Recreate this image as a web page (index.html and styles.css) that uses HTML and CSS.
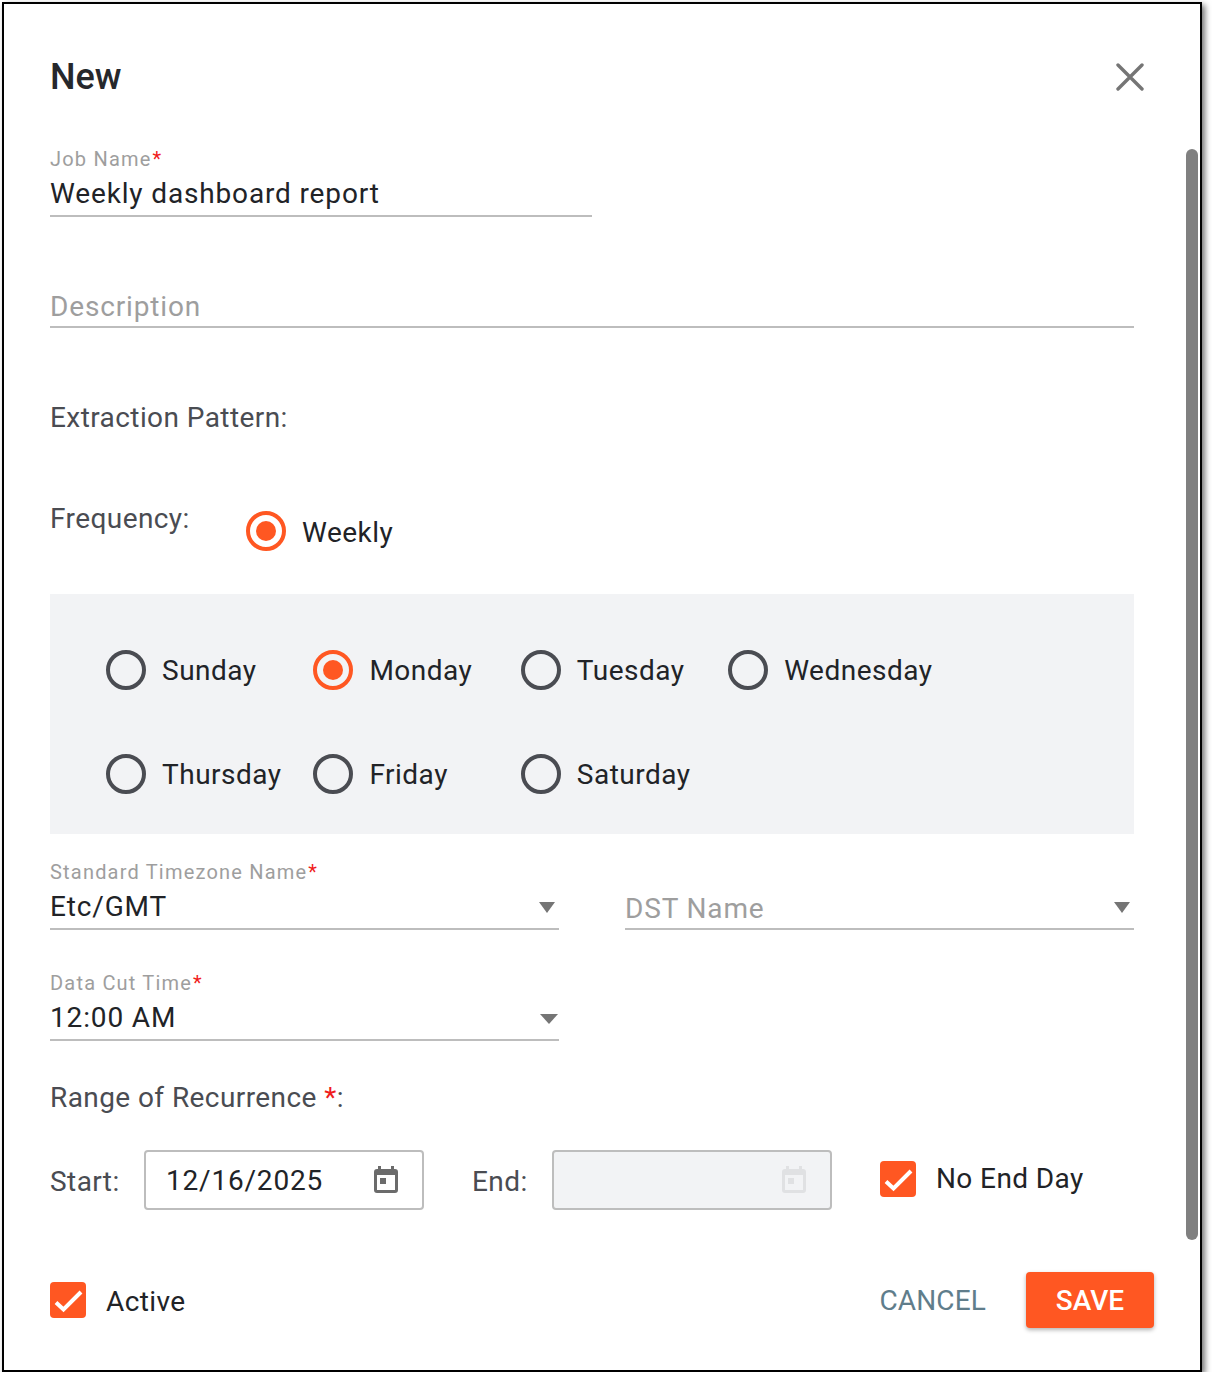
FILE: index.html
```html
<!DOCTYPE html>
<html lang="en">
<head>
<meta charset="utf-8">
<title>New</title>
<link rel="stylesheet" href="styles.css">
</head>
<body>
<div class="dialog">
  <div class="scrollbar"></div>
  <header class="head">
    <h1 class="title">New</h1>
    <svg class="close" viewBox="0 0 28 28" width="28" height="28"><path d="M2 2 26 26M26 2 2 26"/></svg>
  </header>

  <div class="field job">
    <div class="label">Job Name<span class="req">*</span></div>
    <div class="value">Weekly dashboard report</div>
  </div>

  <div class="field desc">
    <div class="value placeholder">Description</div>
  </div>

  <div class="section extraction">Extraction Pattern:</div>

  <div class="freq">
    <div class="section freq-label">Frequency:</div>
    <div class="opt"><span class="radio on"></span><span class="opt-text">Weekly</span></div>
  </div>

  <div class="days">
    <div class="opt"><span class="radio"></span><span class="opt-text">Sunday</span></div>
    <div class="opt"><span class="radio on"></span><span class="opt-text">Monday</span></div>
    <div class="opt"><span class="radio"></span><span class="opt-text">Tuesday</span></div>
    <div class="opt"><span class="radio"></span><span class="opt-text">Wednesday</span></div>
    <div class="opt"><span class="radio"></span><span class="opt-text">Thursday</span></div>
    <div class="opt"><span class="radio"></span><span class="opt-text">Friday</span></div>
    <div class="opt"><span class="radio"></span><span class="opt-text">Saturday</span></div>
  </div>

  <div class="select-row tz">
    <div class="field half">
      <div class="label">Standard Timezone Name<span class="req">*</span></div>
      <div class="value">Etc/GMT<span class="arrow"></span></div>
    </div>
    <div class="field half">
      <div class="value placeholder dst">DST Name<span class="arrow"></span></div>
    </div>
  </div>

  <div class="select-row cut">
    <div class="field half">
      <div class="label">Data Cut Time<span class="req">*</span></div>
      <div class="value">12:00 AM<span class="arrow wide"></span></div>
    </div>
  </div>

  <div class="section range">Range of Recurrence <span class="req">*</span>:</div>

  <div class="dates">
    <span class="date-label start">Start:</span>
    <div class="date-box">
      <span class="date-text">12/16/2025</span>
      <svg class="cal" viewBox="0 0 24 27" width="24" height="27"><path fill-rule="evenodd" d="M4 0h3v3h10V0h3v3h1a3 3 0 0 1 3 3v18a3 3 0 0 1-3 3H3a3 3 0 0 1-3-3V6a3 3 0 0 1 3-3h1zM3 9v15h18V9zM6 12h6v6H6z"/></svg>
    </div>
    <span class="date-label end">End:</span>
    <div class="date-box disabled">
      <svg class="cal" viewBox="0 0 24 27" width="24" height="27"><path fill-rule="evenodd" d="M4 0h3v3h10V0h3v3h1a3 3 0 0 1 3 3v18a3 3 0 0 1-3 3H3a3 3 0 0 1-3-3V6a3 3 0 0 1 3-3h1zM3 9v15h18V9zM6 12h6v6H6z"/></svg>
    </div>
    <div class="check-wrap noend">
      <svg class="check" viewBox="0 0 36 36" width="36" height="36"><rect width="36" height="36" rx="4"/><path d="M6 20.5 13.5 27.5 31 10"/></svg>
      <span class="check-text">No End Day</span>
    </div>
  </div>

  <footer class="foot">
    <div class="check-wrap">
      <svg class="check" viewBox="0 0 36 36" width="36" height="36"><rect width="36" height="36" rx="4"/><path d="M6 20.5 13.5 27.5 31 10"/></svg>
      <span class="check-text active">Active</span>
    </div>
    <div class="actions">
      <span class="cancel">CANCEL</span>
      <span class="save">SAVE</span>
    </div>
  </footer>
</div>
</body>
</html>
```
FILE: styles.css
```css
* { box-sizing: border-box; }
html, body { margin: 0; padding: 0; background: #fff; }
body { font-family: Roboto, "Liberation Sans", sans-serif; color: #212327; }

.dialog {
  position: relative;
  width: 1200px;
  height: 1370px;
  margin: 2px 0 0 2px;
  padding: 0 66px 0 46px;
  border: 2px solid #000;
  background: #fff;
  box-shadow: 3px 3px 6px rgba(0, 0, 0, .55);
  overflow: hidden;
}
.scrollbar {
  position: absolute;
  left: 1182px;
  top: 145px;
  width: 12px;
  height: 1091px;
  border-radius: 6px;
  background: #808080;
}

.head { display: flex; justify-content: space-between; align-items: center; height: 144px; }
.title { margin: 2px 0 0; font-size: 36px; line-height: 42px; font-weight: 500; color: #26282c; }
.close { margin: 2px -10px 0 0; }
.close path { fill: none; stroke: #757575; stroke-width: 3.4; stroke-linecap: round; }

.field { border-bottom: 2px solid #bdbdbd; }
.label { font-size: 20px; line-height: 22px; letter-spacing: 1.2px; color: #9e9e9e; }
.req { color: #f01c1c; }
.label .req { margin-left: 1px; }
.value { position: relative; font-size: 28px; line-height: 34px; letter-spacing: .85px; }
.placeholder { color: #9e9e9e; }

.job { width: 542px; height: 69px; }
.job .value { padding-top: 7px; }
.desc { margin-top: 67px; height: 44px; }
.desc .value { padding-top: 6px; }

.section { font-size: 28px; line-height: 34px; color: #4a4c52; letter-spacing: .42px; }
.extraction { margin-top: 73px; }

.freq { display: flex; margin-top: 67px; height: 92px; }
.freq-label { width: 196px; height: 34px; }
.freq .opt { margin-top: 2px; height: 54px; }
.freq .opt-text { margin-top: 4px; }

.opt { display: flex; align-items: center; }
.radio {
  flex: none;
  width: 40px;
  height: 40px;
  border: 4px solid #4a4c52;
  border-radius: 50%;
  margin-right: 16px;
  position: relative;
}
.radio.on { border-color: #ff5722; }
.radio.on::after {
  content: "";
  position: absolute;
  left: 6px;
  top: 6px;
  width: 20px;
  height: 20px;
  border-radius: 50%;
  background: #ff5722;
}
.opt-text { font-size: 28px; line-height: 34px; letter-spacing: .5px; white-space: nowrap; margin-top: 2px; }

.days {
  display: grid;
  grid-template-columns: repeat(4, 207.4px);
  grid-auto-rows: 104px;
  align-items: center;
  height: 240px;
  padding: 24px 0 0 56px;
  background: #f2f3f5;
}

.select-row { display: flex; gap: 66px; }
.half { width: 509px; height: 70px; }
.half .label { padding-top: 1px; }
.half .value { padding-top: 7px; }
.tz { margin-top: 26px; }
.half .dst { margin-top: 24px; padding-top: 8px; }
.arrow { position: absolute; right: 4px; top: 19px; width: 0; height: 0; border-style: solid; border-width: 11px 8px 0; border-color: #757575 transparent transparent; }
.arrow.wide { right: 1px; top: 20px; border-width: 10px 9.5px 0; }
.half .dst .arrow { top: 18px; }
.cut { margin-top: 41px; }

.range { margin-top: 40px; }

.dates { display: flex; align-items: center; margin-top: 35px; height: 60px; }
.date-label { font-size: 28px; line-height: 34px; color: #4a4c52; letter-spacing: .42px; margin-top: 3px; }
.start { width: 94px; margin-top: 4px; }
.end { width: 80px; margin-left: 48px; }
.date-box {
  display: flex;
  align-items: center;
  justify-content: space-between;
  width: 280px;
  height: 60px;
  padding: 0 24px 0 20px;
  border: 2px solid #bdbdbd;
  border-radius: 4px;
}
.date-text { font-size: 28px; line-height: 34px; letter-spacing: .8px; margin-top: 1px; }
.cal { fill: #6b6b6b; margin: -2px 0 0 auto; }
.disabled { background: #f2f3f5; }
.disabled .cal { fill: #e0e1e3; }

.check-wrap { display: flex; align-items: center; }
.check { flex: none; }
.check rect { fill: #ff5722; }
.check path { fill: none; stroke: #fff; stroke-width: 4; }
.check-text { font-size: 28px; line-height: 34px; letter-spacing: .4px; margin-left: 20px; }
.active { margin-top: 3px; }
.noend { margin-left: 48px; margin-top: -2px; }

.foot { display: flex; justify-content: space-between; align-items: center; margin-top: 62px; height: 56px; margin-right: -20px; }
.actions { display: flex; align-items: center; }
.cancel { font-size: 28px; line-height: 34px; letter-spacing: .15px; color: #607d8b; margin: 2px 40px 0 0; }
.save {
  display: flex;
  align-items: center;
  justify-content: center;
  width: 128px;
  height: 56px;
  border-radius: 4px;
  background: #ff5722;
  color: #fff;
  font-size: 28px;
  font-weight: 500;
  box-shadow: 0 2px 4px rgba(0, 0, 0, .3);
}
```
